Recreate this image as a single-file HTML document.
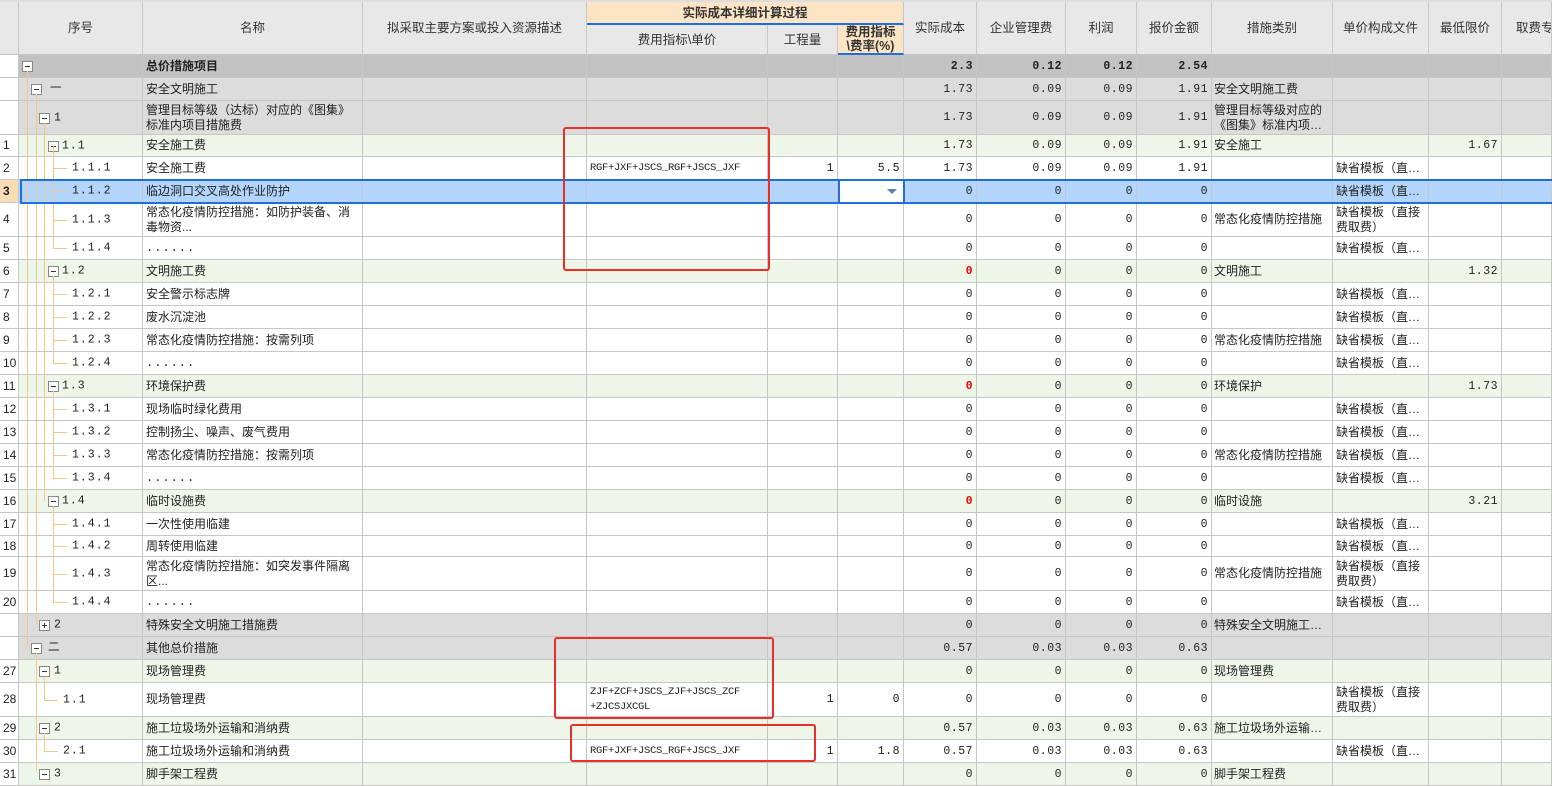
<!DOCTYPE html>
<html><head><meta charset="utf-8">
<style>
*{margin:0;padding:0}
i{font-style:normal}
body{width:1552px;height:771px;overflow:hidden;background:#fff;position:relative;font-family:"Liberation Sans","Noto Sans CJK SC",sans-serif;font-size:12px;color:#222}
.r{display:flex;position:absolute;left:0;width:1552px}
.r>span{box-sizing:border-box;border-right:1px solid #c6c6c6;border-bottom:1px solid #c6c6c6;display:flex;align-items:center;overflow:hidden;white-space:nowrap;padding:0 3px;position:relative;line-height:15px;height:100%}
.r>span:nth-child(1){width:19px;background:#fff;padding:0 0 0 3px}
.r>span:nth-child(2){width:124px}
.r>span:nth-child(3){width:220px}
.r>span:nth-child(4){width:224px}
.r>span:nth-child(5){width:181px;font-family:"Liberation Mono",monospace;font-size:10.5px;letter-spacing:-0.3px}
.r>span:nth-child(6){width:70px}
.r>span:nth-child(7){width:66px}
.r>span:nth-child(8){width:73px}
.r>span:nth-child(9){width:89px}
.r>span:nth-child(10){width:71px}
.r>span:nth-child(11){width:75px}
.r>span:nth-child(12){width:121px;padding:0 2px}
.r>span:nth-child(13){width:96px}
.r>span:nth-child(14){width:73px}
.r>span:nth-child(15){width:50px}
.r>span:nth-child(n+6):nth-child(-n+11),.r>span:nth-child(14){justify-content:flex-end;font-family:"Liberation Mono",monospace;font-size:11.5px;letter-spacing:0.5px}
.wr{white-space:normal!important;word-break:break-all}
.k>span{background:#c2c2c2}.g>span{background:#dcdcdc}.e>span{background:#eef6e9}.h>span{background:#b3d5fb}
.k>span:first-child,.g>span:first-child,.e>span:first-child{background:#fff}
.b{font-weight:bold}
.red{color:#e00;font-weight:bold}
.t{font-family:"Liberation Mono",monospace;font-size:11.5px;letter-spacing:1px;position:absolute;top:50%;transform:translateY(-50%)}
.d{font-family:"Liberation Mono",monospace;letter-spacing:1px}
.bx{position:absolute;top:50%;margin-top:-5px;width:9px;height:9px;border:1px solid #888;background:#fff}
.bx:before{content:"";position:absolute;left:2px;top:4px;width:5px;height:1px;background:#333}
.bx.p:after{content:"";position:absolute;left:4px;top:2px;width:1px;height:5px;background:#333}
.hl{position:absolute;top:50%;height:1px;background:#f0c890}
.vl{position:absolute;width:1px;background:#f0c890;z-index:2}
.hd{position:absolute;box-sizing:border-box;background:#e8e8e8;border-right:1px solid #c6c6c6;border-bottom:1px solid #c6c6c6;display:flex;align-items:center;justify-content:center;font-size:12.5px;color:#333;text-align:center;line-height:14px;white-space:nowrap;overflow:hidden}
.rb{position:absolute;border:2.5px solid #e8302a;border-radius:3px;z-index:5;box-sizing:border-box}
</style></head><body>
<div style="position:absolute;left:0;top:0;width:1552px;height:2px;background:#ddd"></div>
<div class="hd" style="left:0;top:2px;width:19px;height:53px"></div>
<div class="hd" style="left:19px;top:2px;width:124px;height:53px">序号</div>
<div class="hd" style="left:143px;top:2px;width:220px;height:53px">名称</div>
<div class="hd" style="left:363px;top:2px;width:224px;height:53px">拟采取主要方案或投入资源描述</div>
<div class="hd" style="left:587px;top:2px;width:317px;height:23px;background:#fde4c4;font-weight:bold;border-bottom:2px solid #1e6fd9">实际成本详细计算过程</div>
<div class="hd" style="left:587px;top:25px;width:181px;height:30px">费用指标\单价</div>
<div class="hd" style="left:768px;top:25px;width:70px;height:30px">工程量</div>
<div class="hd" style="left:838px;top:25px;width:66px;height:30px;background:#fde4c4;font-weight:bold;border-bottom:2px solid #1e6fd9;white-space:normal">费用指标<br>\费率(%)</div>
<div class="hd" style="left:904px;top:2px;width:73px;height:53px">实际成本</div>
<div class="hd" style="left:977px;top:2px;width:89px;height:53px">企业管理费</div>
<div class="hd" style="left:1066px;top:2px;width:71px;height:53px">利润</div>
<div class="hd" style="left:1137px;top:2px;width:75px;height:53px">报价金额</div>
<div class="hd" style="left:1212px;top:2px;width:121px;height:53px">措施类别</div>
<div class="hd" style="left:1333px;top:2px;width:96px;height:53px">单价构成文件</div>
<div class="hd" style="left:1429px;top:2px;width:73px;height:53px">最低限价</div>
<div class="hd" style="left:1502px;top:2px;width:50px;height:53px;justify-content:flex-start;padding-left:14px">取费专</div>

<div class="r k" style="top:55px;height:23px"><span></span><span><i class="bx" style="left:3px"></i></span><span class="b">总价措施项目</span><span></span><span></span><span></span><span></span><span class="b">2.3</span><span class="b">0.12</span><span class="b">0.12</span><span class="b">2.54</span><span></span><span></span><span></span><span></span></div>
<div class="r g" style="top:78px;height:23px"><span></span><span><i class="bx" style="left:12px"></i><i class="t" style="left:31px">一</i></span><span>安全文明施工</span><span></span><span></span><span></span><span></span><span>1.73</span><span>0.09</span><span>0.09</span><span>1.91</span><span>安全文明施工费</span><span></span><span></span><span></span></div>
<div class="r g" style="top:101px;height:34px"><span></span><span><i class="bx" style="left:20px"></i><i class="t" style="left:35px">1</i></span><span class="wr">管理目标等级（达标）对应的《图集》标准内项目措施费</span><span></span><span></span><span></span><span></span><span>1.73</span><span>0.09</span><span>0.09</span><span>1.91</span><span class="wr">管理目标等级对应的《图集》标准内项…</span><span></span><span></span><span></span></div>
<div class="r e" style="top:135px;height:22px"><span>1</span><span><i class="bx" style="left:29px"></i><i class="t" style="left:43px">1.1</i></span><span>安全施工费</span><span></span><span></span><span></span><span></span><span>1.73</span><span>0.09</span><span>0.09</span><span>1.91</span><span>安全施工</span><span></span><span>1.67</span><span></span></div>
<div class="r" style="top:157px;height:23px"><span>2</span><span><i class="hl" style="left:34px;width:14px"></i><i class="t" style="left:53px">1.1.1</i></span><span>安全施工费</span><span></span><span>RGF+JXF+JSCS_RGF+JSCS_JXF</span><span>1</span><span>5.5</span><span>1.73</span><span>0.09</span><span>0.09</span><span>1.91</span><span></span><span>缺省模板（直…</span><span></span><span></span></div>
<div class="r h" style="top:180px;height:23px"><span style="background:#f9dcb5;font-weight:bold">3</span><span><i class="hl" style="left:34px;width:14px"></i><i class="t" style="left:53px">1.1.2</i></span><span>临边洞口交叉高处作业防护</span><span></span><span></span><span></span><span style="background:#fff"><i style="position:absolute;right:6px;top:9px;border-left:5px solid transparent;border-right:5px solid transparent;border-top:5px solid #5a7fa8"></i></span><span>0</span><span>0</span><span>0</span><span>0</span><span></span><span>缺省模板（直…</span><span></span><span></span></div>
<div class="r" style="top:203px;height:34px"><span>4</span><span><i class="hl" style="left:34px;width:14px"></i><i class="t" style="left:53px">1.1.3</i></span><span class="wr">常态化疫情防控措施：如防护装备、消毒物资...</span><span></span><span></span><span></span><span></span><span>0</span><span>0</span><span>0</span><span>0</span><span>常态化疫情防控措施</span><span class="wr">缺省模板（直接费取费）</span><span></span><span></span></div>
<div class="r" style="top:237px;height:23px"><span>5</span><span><i class="hl" style="left:34px;width:14px"></i><i class="t" style="left:53px">1.1.4</i></span><span class="d">......</span><span></span><span></span><span></span><span></span><span>0</span><span>0</span><span>0</span><span>0</span><span></span><span>缺省模板（直…</span><span></span><span></span></div>

<div class="r e" style="top:260px;height:23px"><span>6</span><span><i class="bx" style="left:29px"></i><i class="t" style="left:43px">1.2</i></span><span>文明施工费</span><span></span><span></span><span></span><span></span><span class="red">0</span><span>0</span><span>0</span><span>0</span><span>文明施工</span><span></span><span>1.32</span><span></span></div>
<div class="r" style="top:283px;height:23px"><span>7</span><span><i class="hl" style="left:34px;width:14px"></i><i class="t" style="left:53px">1.2.1</i></span><span>安全警示标志牌</span><span></span><span></span><span></span><span></span><span>0</span><span>0</span><span>0</span><span>0</span><span></span><span>缺省模板（直…</span><span></span><span></span></div>
<div class="r" style="top:306px;height:23px"><span>8</span><span><i class="hl" style="left:34px;width:14px"></i><i class="t" style="left:53px">1.2.2</i></span><span>废水沉淀池</span><span></span><span></span><span></span><span></span><span>0</span><span>0</span><span>0</span><span>0</span><span></span><span>缺省模板（直…</span><span></span><span></span></div>
<div class="r" style="top:329px;height:23px"><span>9</span><span><i class="hl" style="left:34px;width:14px"></i><i class="t" style="left:53px">1.2.3</i></span><span>常态化疫情防控措施：按需列项</span><span></span><span></span><span></span><span></span><span>0</span><span>0</span><span>0</span><span>0</span><span>常态化疫情防控措施</span><span>缺省模板（直…</span><span></span><span></span></div>
<div class="r" style="top:352px;height:23px"><span>10</span><span><i class="hl" style="left:34px;width:14px"></i><i class="t" style="left:53px">1.2.4</i></span><span class="d">......</span><span></span><span></span><span></span><span></span><span>0</span><span>0</span><span>0</span><span>0</span><span></span><span>缺省模板（直…</span><span></span><span></span></div>

<div class="r e" style="top:375px;height:23px"><span>11</span><span><i class="bx" style="left:29px"></i><i class="t" style="left:43px">1.3</i></span><span>环境保护费</span><span></span><span></span><span></span><span></span><span class="red">0</span><span>0</span><span>0</span><span>0</span><span>环境保护</span><span></span><span>1.73</span><span></span></div>
<div class="r" style="top:398px;height:23px"><span>12</span><span><i class="hl" style="left:34px;width:14px"></i><i class="t" style="left:53px">1.3.1</i></span><span>现场临时绿化费用</span><span></span><span></span><span></span><span></span><span>0</span><span>0</span><span>0</span><span>0</span><span></span><span>缺省模板（直…</span><span></span><span></span></div>
<div class="r" style="top:421px;height:23px"><span>13</span><span><i class="hl" style="left:34px;width:14px"></i><i class="t" style="left:53px">1.3.2</i></span><span>控制扬尘、噪声、废气费用</span><span></span><span></span><span></span><span></span><span>0</span><span>0</span><span>0</span><span>0</span><span></span><span>缺省模板（直…</span><span></span><span></span></div>
<div class="r" style="top:444px;height:23px"><span>14</span><span><i class="hl" style="left:34px;width:14px"></i><i class="t" style="left:53px">1.3.3</i></span><span>常态化疫情防控措施：按需列项</span><span></span><span></span><span></span><span></span><span>0</span><span>0</span><span>0</span><span>0</span><span>常态化疫情防控措施</span><span>缺省模板（直…</span><span></span><span></span></div>
<div class="r" style="top:467px;height:23px"><span>15</span><span><i class="hl" style="left:34px;width:14px"></i><i class="t" style="left:53px">1.3.4</i></span><span class="d">......</span><span></span><span></span><span></span><span></span><span>0</span><span>0</span><span>0</span><span>0</span><span></span><span>缺省模板（直…</span><span></span><span></span></div>

<div class="r e" style="top:490px;height:23px"><span>16</span><span><i class="bx" style="left:29px"></i><i class="t" style="left:43px">1.4</i></span><span>临时设施费</span><span></span><span></span><span></span><span></span><span class="red">0</span><span>0</span><span>0</span><span>0</span><span>临时设施</span><span></span><span>3.21</span><span></span></div>
<div class="r" style="top:513px;height:23px"><span>17</span><span><i class="hl" style="left:34px;width:14px"></i><i class="t" style="left:53px">1.4.1</i></span><span>一次性使用临建</span><span></span><span></span><span></span><span></span><span>0</span><span>0</span><span>0</span><span>0</span><span></span><span>缺省模板（直…</span><span></span><span></span></div>
<div class="r" style="top:536px;height:21px"><span>18</span><span><i class="hl" style="left:34px;width:14px"></i><i class="t" style="left:53px">1.4.2</i></span><span>周转使用临建</span><span></span><span></span><span></span><span></span><span>0</span><span>0</span><span>0</span><span>0</span><span></span><span>缺省模板（直…</span><span></span><span></span></div>
<div class="r" style="top:557px;height:34px"><span>19</span><span><i class="hl" style="left:34px;width:14px"></i><i class="t" style="left:53px">1.4.3</i></span><span class="wr">常态化疫情防控措施：如突发事件隔离区...</span><span></span><span></span><span></span><span></span><span>0</span><span>0</span><span>0</span><span>0</span><span>常态化疫情防控措施</span><span class="wr">缺省模板（直接费取费）</span><span></span><span></span></div>
<div class="r" style="top:591px;height:23px"><span>20</span><span><i class="hl" style="left:34px;width:14px"></i><i class="t" style="left:53px">1.4.4</i></span><span class="d">......</span><span></span><span></span><span></span><span></span><span>0</span><span>0</span><span>0</span><span>0</span><span></span><span>缺省模板（直…</span><span></span><span></span></div>

<div class="r g" style="top:614px;height:23px"><span></span><span><i class="bx p" style="left:20px"></i><i class="t" style="left:35px">2</i></span><span>特殊安全文明施工措施费</span><span></span><span></span><span></span><span></span><span>0</span><span>0</span><span>0</span><span>0</span><span>特殊安全文明施工…</span><span></span><span></span><span></span></div>
<div class="r g" style="top:637px;height:23px"><span></span><span><i class="bx" style="left:12px"></i><i class="t" style="left:29px">二</i></span><span>其他总价措施</span><span></span><span></span><span></span><span></span><span>0.57</span><span>0.03</span><span>0.03</span><span>0.63</span><span></span><span></span><span></span><span></span></div>
<div class="r e" style="top:660px;height:23px"><span>27</span><span><i class="bx" style="left:20px"></i><i class="t" style="left:35px">1</i></span><span>现场管理费</span><span></span><span></span><span></span><span></span><span>0</span><span>0</span><span>0</span><span>0</span><span>现场管理费</span><span></span><span></span><span></span></div>
<div class="r" style="top:683px;height:34px"><span>28</span><span><i class="hl" style="left:25px;width:14px"></i><i class="t" style="left:44px">1.1</i></span><span>现场管理费</span><span></span><span class="wr">ZJF+ZCF+JSCS_ZJF+JSCS_ZCF<br>+ZJCSJXCGL</span><span>1</span><span>0</span><span>0</span><span>0</span><span>0</span><span>0</span><span></span><span class="wr">缺省模板（直接费取费）</span><span></span><span></span></div>
<div class="r e" style="top:717px;height:23px"><span>29</span><span><i class="bx" style="left:20px"></i><i class="t" style="left:35px">2</i></span><span>施工垃圾场外运输和消纳费</span><span></span><span></span><span></span><span></span><span>0.57</span><span>0.03</span><span>0.03</span><span>0.63</span><span>施工垃圾场外运输…</span><span></span><span></span><span></span></div>
<div class="r" style="top:740px;height:23px"><span>30</span><span><i class="hl" style="left:25px;width:14px"></i><i class="t" style="left:44px">2.1</i></span><span>施工垃圾场外运输和消纳费</span><span></span><span>RGF+JXF+JSCS_RGF+JSCS_JXF</span><span>1</span><span>1.8</span><span>0.57</span><span>0.03</span><span>0.03</span><span>0.63</span><span></span><span>缺省模板（直…</span><span></span><span></span></div>
<div class="r e" style="top:763px;height:23px"><span>31</span><span><i class="bx" style="left:20px"></i><i class="t" style="left:35px">3</i></span><span>脚手架工程费</span><span></span><span></span><span></span><span></span><span>0</span><span>0</span><span>0</span><span>0</span><span>脚手架工程费</span><span></span><span></span><span></span></div>

<div class="vl" style="left:27px;top:71px;height:577px"></div>
<div class="vl" style="left:36px;top:94px;height:531px"></div>
<div class="vl" style="left:44px;top:123px;height:378px"></div>
<div class="vl" style="left:53px;top:146px;height:102px"></div>
<div class="vl" style="left:53px;top:276px;height:87px"></div>
<div class="vl" style="left:53px;top:391px;height:87px"></div>
<div class="vl" style="left:53px;top:506px;height:96px"></div>
<div class="vl" style="left:36px;top:653px;height:118px"></div>
<div class="vl" style="left:44px;top:676px;height:24px"></div>
<div class="vl" style="left:44px;top:733px;height:19px"></div>

<div style="position:absolute;left:20px;top:179px;width:1532px;height:25px;box-sizing:border-box;border:2px solid #1e6fd9;border-right:none;z-index:4"></div>
<div style="position:absolute;left:838px;top:179px;width:67px;height:25px;box-sizing:border-box;border:2px solid #1e6fd9;z-index:4"></div>

<div class="rb" style="left:563px;top:127px;width:207px;height:144px"></div>
<div class="rb" style="left:554px;top:637px;width:220px;height:82px"></div>
<div class="rb" style="left:570px;top:724px;width:246px;height:38px"></div>
</body></html>
